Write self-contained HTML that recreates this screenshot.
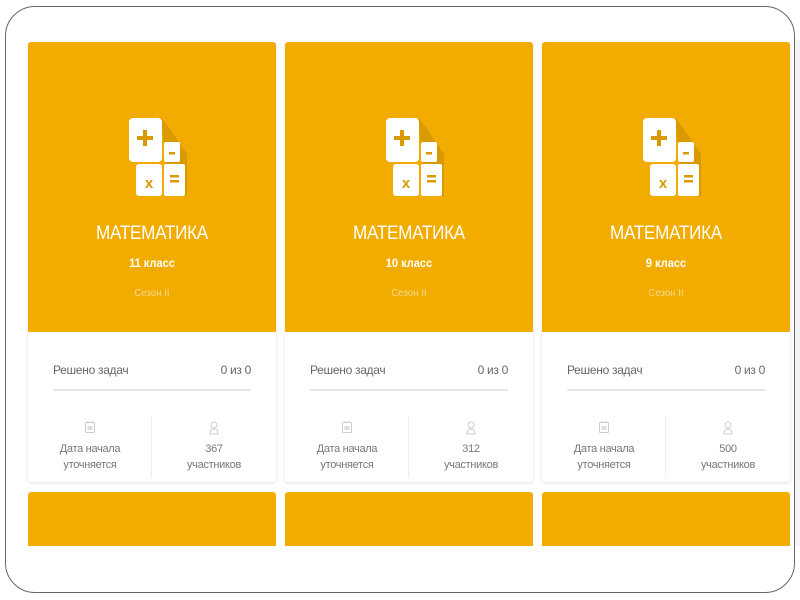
<!DOCTYPE html>
<html><head><meta charset="utf-8"><style>
*{margin:0;padding:0;box-sizing:border-box}
body{width:800px;height:600px;background:#fff;position:relative;overflow:hidden;font-family:"Liberation Sans",sans-serif}
.rbg{position:absolute;left:794px;top:40px;width:6px;height:506px;background:#f3f4f6}
.frame{position:absolute;left:5px;top:6px;width:790px;height:587px;border:1.5px solid #666;border-radius:30px}
.card{position:absolute;top:42px;width:248px;height:440px;background:#fff;box-shadow:0 1px 3px rgba(0,0,0,.12);border-radius:3px;overflow:hidden}
.top{height:290px;background:#f2ac00;position:relative;text-align:center;color:#fff}
.icon{position:absolute;left:101px;top:76px}
.t1{position:absolute;top:181px;width:100%;font-size:19px;letter-spacing:-0.3px;transform:scaleX(0.9)}
.t2{position:absolute;top:214px;width:100%;font-size:12px;font-weight:bold;transform:scaleX(0.92)}
.t3{position:absolute;top:245px;width:100%;font-size:10.5px;color:#f8d88a;transform:scaleX(0.92)}
.row{position:absolute;top:321px;left:25px;right:25px;font-size:12px;color:#666;display:flex;justify-content:space-between;letter-spacing:-0.3px}
.line{position:absolute;top:347px;left:25px;right:25px;height:2px;background:#e6e7ea}
.st{position:absolute;top:376px;width:124px;height:62px;text-align:center;font-size:11px;color:#777;line-height:16px;letter-spacing:-0.3px}
.st .ic{height:23px;display:flex;justify-content:center;align-items:flex-start;padding-top:3px}
.sep{position:absolute;left:123px;top:374px;width:1px;height:62px;background:#eee}
.card2{position:absolute;top:492px;width:248px;height:54px;background:#f2ac00;border-radius:3px 3px 0 0}
</style></head><body>
<div class="rbg"></div>
<div class="frame"></div>

<svg width="0" height="0" style="position:absolute"><defs>
<g id="calc">
<polygon points="32,0 36,4 58,36 58,78 40,78" fill="#d99a00"/>
<rect x="0" y="0" width="33" height="44" rx="4" fill="#fff"/>
<rect x="35" y="24" width="16" height="20" rx="2" fill="#fff"/>
<rect x="7" y="46" width="26" height="32" rx="3" fill="#fff"/>
<rect x="35" y="46" width="21" height="32" rx="2" fill="#fff"/>
<rect x="8" y="18" width="16" height="4" fill="#d99a00"/>
<rect x="14" y="12" width="4" height="16" fill="#d99a00"/>
<rect x="40" y="34" width="6" height="2.5" fill="#d99a00"/>
<text x="20" y="70" font-family="Liberation Sans" font-weight="bold" font-size="15" fill="#d99a00" text-anchor="middle">x</text>
<rect x="41" y="57" width="9" height="2.5" fill="#d99a00"/>
<rect x="41" y="62" width="9" height="2.5" fill="#d99a00"/>
</g>
<g id="cal"><rect x="0.5" y="1.5" width="9" height="10" rx="1" fill="none" stroke="#ccc"/><rect x="2.5" y="5" width="5" height="4" fill="#ddd"/><line x1="3" y1="0" x2="3" y2="2" stroke="#ccc"/><line x1="7" y1="0" x2="7" y2="2" stroke="#ccc"/></g>
<g id="usr"><circle cx="5" cy="4" r="3" fill="none" stroke="#ccc"/><path d="M1 13 Q1 8 5 8 Q9 8 9 13 Z" fill="none" stroke="#ccc"/></g>
</defs></svg>

<div class="card" style="left:28px">
<div class="top"><svg class="icon" width="60" height="80"><use href="#calc"/></svg>
<div class="t1">МАТЕМАТИКА</div><div class="t2">11 класс</div><div class="t3">Сезон II</div></div>
<div class="row"><span>Решено задач</span><span>0 из 0</span></div><div class="line"></div>
<div class="st" style="left:0"><div class="ic"><svg width="10" height="12"><use href="#cal"/></svg></div>Дата начала<br>уточняется</div>
<div class="sep"></div>
<div class="st" style="left:124px"><div class="ic"><svg width="10" height="14"><use href="#usr"/></svg></div>367<br>участников</div>
</div>

<div class="card" style="left:285px">
<div class="top"><svg class="icon" width="60" height="80"><use href="#calc"/></svg>
<div class="t1">МАТЕМАТИКА</div><div class="t2">10 класс</div><div class="t3">Сезон II</div></div>
<div class="row"><span>Решено задач</span><span>0 из 0</span></div><div class="line"></div>
<div class="st" style="left:0"><div class="ic"><svg width="10" height="12"><use href="#cal"/></svg></div>Дата начала<br>уточняется</div>
<div class="sep"></div>
<div class="st" style="left:124px"><div class="ic"><svg width="10" height="14"><use href="#usr"/></svg></div>312<br>участников</div>
</div>

<div class="card" style="left:542px">
<div class="top"><svg class="icon" width="60" height="80"><use href="#calc"/></svg>
<div class="t1">МАТЕМАТИКА</div><div class="t2">9 класс</div><div class="t3">Сезон II</div></div>
<div class="row"><span>Решено задач</span><span>0 из 0</span></div><div class="line"></div>
<div class="st" style="left:0"><div class="ic"><svg width="10" height="12"><use href="#cal"/></svg></div>Дата начала<br>уточняется</div>
<div class="sep"></div>
<div class="st" style="left:124px"><div class="ic"><svg width="10" height="14"><use href="#usr"/></svg></div>500<br>участников</div>
</div>

<div class="card2" style="left:28px"></div>
<div class="card2" style="left:285px"></div>
<div class="card2" style="left:542px"></div>
</body></html>
